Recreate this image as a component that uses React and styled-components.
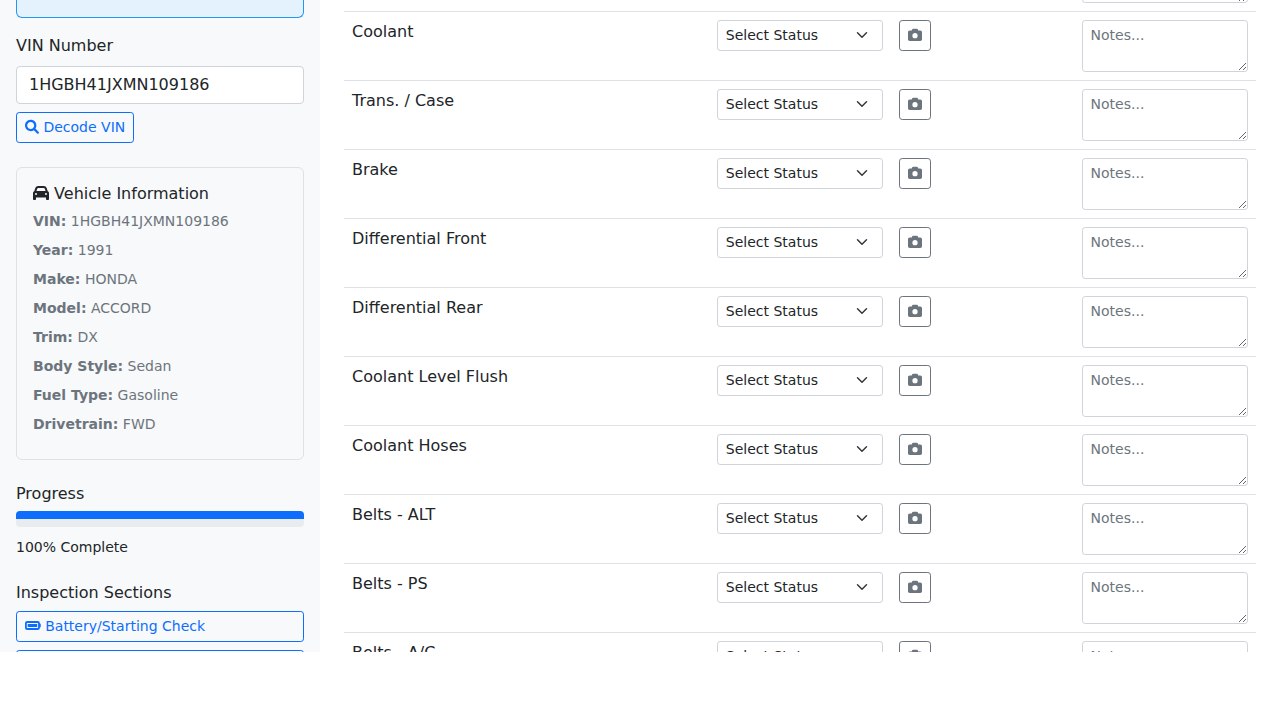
import React from "react";
import styled, { createGlobalStyle } from "styled-components";
import { FaCar, FaCamera } from "react-icons/fa6";

const GlobalStyle = createGlobalStyle`
  *, *::before, *::after { box-sizing: border-box; }
  body {
    margin: 0;
    background: #fff;
    color: #212529;
    font-family: "DejaVu Sans", sans-serif;
    font-size: 16px;
    line-height: 1.5;
  }
  input, select, textarea, button { font-family: inherit; margin: 0; }
`;

const Shell = styled.div`
  display: flex;
  height: 652px;
  overflow: hidden;
`;

const Sidebar = styled.aside`
  flex: 0 0 320px;
  padding: 0 16px;
  background: #f8f9fa;
`;

const Notice = styled.div`
  height: 18px;
  margin-bottom: 16px;
  border: 1px solid #2196f3;
  border-top: 0;
  border-radius: 0 0 6px 6px;
  background: #e3f2fd;
`;

const FieldLabel = styled.label`
  display: block;
  margin-bottom: 8px;
`;

const TextInput = styled.input`
  display: block;
  width: 100%;
  height: 38px;
  margin-bottom: 8px;
  padding: 5px 12px 7px;
  border: 1px solid #ced4da;
  border-radius: 4px;
  background: #fff;
  color: #212529;
  font-size: 16px;
  line-height: 1.5;
`;

const Button = styled.button`
  display: ${(p) => (p.$block ? "block" : "inline-block")};
  width: ${(p) => (p.$block ? "100%" : "auto")};
  padding: 4px 8px;
  border: 1px solid ${(p) => (p.$muted ? "#6c757d" : "#0d6efd")};
  border-radius: 3.2px;
  background: transparent;
  color: ${(p) => (p.$muted ? "#6c757d" : "#0d6efd")};
  font-size: 14px;
  line-height: 21px;
  text-align: left;
  vertical-align: top;
`;

const Glyph = styled.svg`
  width: ${(p) => p.$width || "1em"};
  height: 1em;
  overflow: visible;
  fill: currentColor;
  vertical-align: ${(p) => p.$drop || "-0.125em"};
`;

const DecodeRow = styled.div`
  height: 31px;
  margin-bottom: 24px;
`;

const InfoCard = styled.section`
  margin-bottom: 24px;
  padding: 16px;
  border: 1px solid #dee2e6;
  border-radius: 6px;
`;

const Heading = styled.h6`
  margin: 0 0 8px;
  font-size: 16px;
  font-weight: 500;
  line-height: 1.2;
`;

const InfoLine = styled.p`
  margin: 0 0 8px;
  color: #6c757d;
  font-size: 14px;
  line-height: 21px;

  strong { font-weight: 700; }
`;

const ProgressTrack = styled.div`
  height: 16px;
  margin-bottom: 8px;
  overflow: hidden;
  border-radius: 4px;
  background: #e9ecef;
`;

const ProgressFill = styled.div`
  height: 8px;
  background: #0d6efd;
`;

const ProgressText = styled.div`
  margin-bottom: 24px;

  small { font-size: 14px; }
`;

const SectionList = styled.nav`
  display: grid;
  gap: 8px;
`;

const Main = styled.main`
  flex: 1;
  min-width: 0;
  padding: 0 24px;
`;

const Row = styled.div`
  display: grid;
  grid-template-columns: 40% 20% 20% 20%;
  height: 69px;
  border-bottom: 1px solid #dee2e6;
`;

const TopRow = styled(Row)`
  height: 12.25px;
  overflow: hidden;
  align-content: end;
`;

const Cell = styled.div`
  padding: 8px;
  grid-column: ${(p) => p.$column || "auto"};
`;

const chevron =
  "url(\"data:image/svg+xml,%3csvg xmlns='http://www.w3.org/2000/svg' viewBox='0 0 16 16'%3e%3cpath fill='none' stroke='%23343a40' stroke-linecap='round' stroke-linejoin='round' stroke-width='2' d='M2 5l6 6 6-6'/%3e%3c/svg%3e\")";

const StatusSelect = styled.select`
  display: block;
  width: 100%;
  height: 31px;
  padding: 4px 36px 4px 8px;
  appearance: none;
  border: 1px solid #ced4da;
  border-radius: 3.2px;
  background: #fff ${chevron} no-repeat right 12px top 8px / 16px 12px;
  color: #212529;
  font-size: 14px;
  line-height: 1.5;
`;

const Notes = styled.textarea`
  display: block;
  width: 100%;
  height: 52px;
  padding: 4px 8px;
  border: 1px solid #ced4da;
  border-radius: 3.2px;
  background: #fff;
  color: #212529;
  font-size: 14px;
  line-height: 1.5;
  resize: vertical;

  &::placeholder { color: #6c757d; opacity: 1; }
`;

const vehicle = [
  ["VIN", "1HGBH41JXMN109186"],
  ["Year", "1991"],
  ["Make", "HONDA"],
  ["Model", "ACCORD"],
  ["Trim", "DX"],
  ["Body Style", "Sedan"],
  ["Fuel Type", "Gasoline"],
  ["Drivetrain", "FWD"],
];

const items = [
  "Coolant",
  "Trans. / Case",
  "Brake",
  "Differential Front",
  "Differential Rear",
  "Coolant Level Flush",
  "Coolant Hoses",
  "Belts - ALT",
  "Belts - PS",
  "Belts - A/C",
];

function SearchIcon() {
  return (
    <Glyph viewBox="0 9 512 512">
      <path d="M500.3 443.7l-119.7-119.7c27.22-40.41 40.65-90.9 33.46-144.7C401.8 87.79 326.8 13.32 235.2 1.723C99.01-15.51-15.51 99.01 1.724 235.2c11.6 91.64 86.08 166.7 177.6 178.9c53.8 7.189 104.3-6.236 144.7-33.46l119.7 119.7c15.62 15.62 40.95 15.62 56.57 0C515.9 484.7 515.9 459.3 500.3 443.7zM79.1 208c0-70.58 57.42-128 128-128s128 57.42 128 128c0 70.58-57.42 128-128 128S79.1 278.6 79.1 208z" />
    </Glyph>
  );
}

function BatteryIcon() {
  return (
    <Glyph viewBox="0 0 15.75 14" $width="1.125em" $drop="-2.25px">
      <path
        fillRule="evenodd"
        d="M2.2 2H12.7A2.2 2.2 0 0 1 14.9 4.2V4.6A.85.85 0 0 1 15.75 5.5V7.5A.85.85 0 0 1 14.9 8.4V8.8A2.2 2.2 0 0 1 12.7 11H2.2A2.2 2.2 0 0 1 0 8.8V4.2A2.2 2.2 0 0 1 2.2 2ZM2.2 4A.4.4 0 0 0 1.8 4.4V8.6A.4.4 0 0 0 2.2 9H12.7A.4.4 0 0 0 13.1 8.6V4.4A.4.4 0 0 0 12.7 4ZM2.7 5H12.2V8H2.7Z"
      />
    </Glyph>
  );
}

function InspectionRow({ name }) {
  return (
    <Row>
      <Cell>{name}</Cell>
      <Cell>
        <StatusSelect>
          <option>Select Status</option>
        </StatusSelect>
      </Cell>
      <Cell>
        <Button $muted>
          <Glyph as={FaCamera} viewBox="0 9 512 512" />
        </Button>
      </Cell>
      <Cell>
        <Notes placeholder="Notes..." />
      </Cell>
    </Row>
  );
}

export default function App() {
  return (
    <>
      <GlobalStyle />
      <Shell>
        <Sidebar>
          <Notice />
          <FieldLabel htmlFor="vin">VIN Number</FieldLabel>
          <TextInput id="vin" defaultValue="1HGBH41JXMN109186" />
          <DecodeRow>
            <Button>
              <SearchIcon /> Decode VIN
            </Button>
          </DecodeRow>
          <InfoCard>
            <Heading>
              <Glyph as={FaCar} /> Vehicle Information
            </Heading>
            {vehicle.map(([label, value]) => (
              <InfoLine key={label}>
                <strong>{label}:</strong> {value}
              </InfoLine>
            ))}
          </InfoCard>
          <Heading>Progress</Heading>
          <ProgressTrack>
            <ProgressFill style={{ width: "100%" }} />
          </ProgressTrack>
          <ProgressText>
            <small>100% Complete</small>
          </ProgressText>
          <Heading>Inspection Sections</Heading>
          <SectionList>
            <Button $block>
              <BatteryIcon /> Battery/Starting Check
            </Button>
            <Button $block>&nbsp;</Button>
          </SectionList>
        </Sidebar>
        <Main>
          <TopRow>
            <Cell $column="4">
              <Notes />
            </Cell>
          </TopRow>
          {items.map((name) => (
            <InspectionRow key={name} name={name} />
          ))}
        </Main>
      </Shell>
    </>
  );
}
